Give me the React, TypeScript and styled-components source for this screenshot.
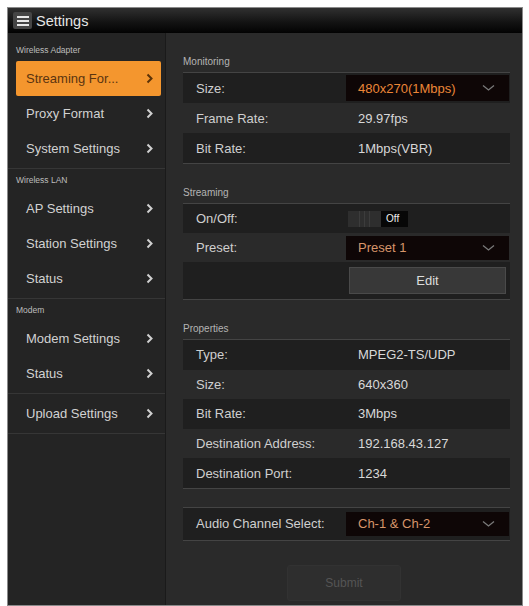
import React from 'react';
import styled, { createGlobalStyle } from 'styled-components';

const GlobalStyle = createGlobalStyle`
  html, body {
    margin: 0;
    padding: 0;
    background: #ffffff;
  }
  body {
    font-family: "Liberation Sans", Arial, sans-serif;
  }
`;

const Chevron = () => (
  <svg width="13" height="8" viewBox="0 0 13 8">
    <polyline points="1,1.5 6.5,6 12,1.5" fill="none" stroke="#7a7a7a" strokeWidth="1.3" />
  </svg>
);

const Arrow = ({ color }: { color: string }) => (
  <svg width="7" height="11" viewBox="0 0 7 11">
    <polyline points="1.5,1.5 5.5,5.5 1.5,9.5" fill="none" stroke={color} strokeWidth="2" />
  </svg>
);

type Item = { label: string; active?: boolean };
type Group = { title?: string; items: Item[] };

const menu: Group[] = [
  {
    title: 'Wireless Adapter',
    items: [{ label: 'Streaming For...', active: true }, { label: 'Proxy Format' }, { label: 'System Settings' }],
  },
  { title: 'Wireless LAN', items: [{ label: 'AP Settings' }, { label: 'Station Settings' }, { label: 'Status' }] },
  { title: 'Modem', items: [{ label: 'Modem Settings' }, { label: 'Status' }] },
  { items: [{ label: 'Upload Settings' }] },
];

const properties = [
  ['Type:', 'MPEG2-TS/UDP'],
  ['Size:', '640x360'],
  ['Bit Rate:', '3Mbps'],
  ['Destination Address:', '192.168.43.127'],
  ['Destination Port:', '1234'],
];

const App = () => {
  return (
    <>
      <GlobalStyle />
      <Frame>
        <TopBar>
          <MenuButton>
            <span />
            <span />
            <span />
          </MenuButton>
          <TopTitle>Settings</TopTitle>
        </TopBar>
        <Body>
          <Sidebar>
            {menu.map((group, gi) => (
              <MenuGroup key={gi} $first={gi === 0} $titled={!!group.title}>
                {group.title && <GroupTitle>{group.title}</GroupTitle>}
                {group.items.map((item) => (
                  <MenuItem key={item.label} $active={item.active}>
                    <span>{item.label}</span>
                    <Arrow color={item.active ? '#5a3208' : '#d0d0d0'} />
                  </MenuItem>
                ))}
              </MenuGroup>
            ))}
          </Sidebar>

          <Main>
            <Section>
              <SectionTitle>Monitoring</SectionTitle>
              <Table>
                <Row $dark $h={30}>
                  <Label>Size:</Label>
                  <Select $h={26}>
                    <SelectText>480x270(1Mbps)</SelectText>
                    <Chevron />
                  </Select>
                </Row>
                <Row $h={30}>
                  <Label>Frame Rate:</Label>
                  <Value>29.97fps</Value>
                </Row>
                <Row $dark $h={30}>
                  <Label>Bit Rate:</Label>
                  <Value>1Mbps(VBR)</Value>
                </Row>
              </Table>
            </Section>

            <Section>
              <SectionTitle>Streaming</SectionTitle>
              <Table>
                <Row $dark $h={29}>
                  <Label>On/Off:</Label>
                  <Toggle>
                    <ToggleGrip>
                      <i />
                      <i />
                      <i />
                    </ToggleGrip>
                    <ToggleState>Off</ToggleState>
                  </Toggle>
                </Row>
                <Row $h={29}>
                  <Label>Preset:</Label>
                  <Select $h={24}>
                    <SelectText $muted>Preset 1</SelectText>
                    <Chevron />
                  </Select>
                </Row>
                <Row $dark $h={37}>
                  <span />
                  <EditButton>Edit</EditButton>
                </Row>
              </Table>
            </Section>

            <Section>
              <SectionTitle>Properties</SectionTitle>
              <Table>
                {properties.map(([label, value], i) => (
                  <Row key={label} $dark={i % 2 === 0} $h={29.6}>
                    <Label>{label}</Label>
                    <Value>{value}</Value>
                  </Row>
                ))}
              </Table>
            </Section>

            <AudioTable>
              <Row $dark $h={32}>
                <Label>Audio Channel Select:</Label>
                <Select $h={24}>
                  <SelectText $muted>Ch-1 &amp; Ch-2</SelectText>
                  <Chevron />
                </Select>
              </Row>
            </AudioTable>

            <SubmitRow>
              <SubmitButton disabled>Submit</SubmitButton>
            </SubmitRow>
          </Main>
        </Body>
      </Frame>
    </>
  );
};

export default App;

const Frame = styled.div`
  margin: 7px 6px 0 7px;
  height: 597px;
  border: 1px solid #8a8a8a;
  display: flex;
  flex-direction: column;
  background: #2a2a2a;
  overflow: hidden;
`;

const TopBar = styled.div`
  height: 25px;
  flex-shrink: 0;
  display: flex;
  align-items: center;
  gap: 4px;
  padding-left: 5px;
  background: linear-gradient(#303030, #141414 55%, #020202);
`;

const MenuButton = styled.div`
  width: 19px;
  height: 17px;
  border-radius: 2px;
  background: #454545;
  display: flex;
  flex-direction: column;
  justify-content: center;
  align-items: center;
  gap: 2px;

  span {
    display: block;
    width: 12px;
    height: 2px;
    background: #e8e8e8;
  }
`;

const TopTitle = styled.div`
  color: #e6e6e6;
  font-size: 14.5px;
`;

const Body = styled.div`
  flex: 1;
  display: flex;
  min-height: 0;
`;

const Sidebar = styled.div`
  width: 157px;
  flex-shrink: 0;
  background: #242424;
  border-right: 1px solid #1a1a1a;
`;

const MenuGroup = styled.div<{ $first?: boolean; $titled?: boolean }>`
  padding-top: ${(p) => (p.$first ? '6px' : p.$titled ? '0' : '2px')};
  padding-bottom: 2px;
  border-bottom: 1px solid #363636;
`;

const GroupTitle = styled.div`
  height: 22px;
  line-height: 22px;
  padding-left: 8px;
  font-size: 8.5px;
  color: #bdbdbd;
`;

const MenuItem = styled.div<{ $active?: boolean }>`
  height: 35px;
  margin: 0 4px 0 8px;
  padding: 0 8px 0 10px;
  display: flex;
  align-items: center;
  justify-content: space-between;
  font-size: 13px;
  color: ${(p) => (p.$active ? '#5a3410' : '#d2d2d2')};
  background: ${(p) => (p.$active ? '#f4962e' : 'transparent')};
  border-radius: 2px;
`;

const Main = styled.div`
  flex: 1;
  padding: 18px 12px 0 17px;
  background: #2a2a2a;
`;

const Section = styled.div`
  margin-bottom: 18px;
`;

const SectionTitle = styled.div`
  height: 21px;
  line-height: 21px;
  font-size: 10px;
  color: #b4b4b4;
  border-bottom: 1px solid #444444;
`;

const Table = styled.div`
  border-bottom: 1px solid #444444;
`;

const AudioTable = styled.div`
  margin-top: 2px;
  border-top: 1px solid #444444;
  border-bottom: 1px solid #444444;
`;

const Row = styled.div<{ $dark?: boolean; $h: number }>`
  height: ${(p) => p.$h}px;
  display: grid;
  grid-template-columns: 163px 1fr;
  align-items: center;
  background: ${(p) => (p.$dark ? '#1f1f1f' : 'transparent')};
`;

const Label = styled.div`
  padding-left: 13px;
  font-size: 13px;
  color: #cfcfcf;
  white-space: nowrap;
`;

const Value = styled.div`
  padding-left: 12px;
  font-size: 13px;
  color: #d8d8d8;
`;

const Select = styled.div<{ $h: number }>`
  height: ${(p) => p.$h}px;
  margin-right: 1px;
  padding: 0 14px 0 12px;
  display: flex;
  align-items: center;
  justify-content: space-between;
  background: #0e0606;
`;

const SelectText = styled.span<{ $muted?: boolean }>`
  font-size: 13px;
  color: ${(p) => (p.$muted ? '#d6956a' : '#ec8638')};
`;

const Toggle = styled.div`
  margin-left: 2px;
  width: 60px;
  height: 16px;
  display: flex;
`;

const ToggleGrip = styled.div`
  width: 33px;
  background: #2e2e2e;
  display: flex;
  justify-content: center;
  gap: 4px;

  i {
    display: block;
    width: 1px;
    background: #3c3c3c;
  }
`;

const ToggleState = styled.div`
  flex: 1;
  background: #070707;
  color: #eeeeee;
  font-size: 10px;
  display: flex;
  align-items: center;
  padding-left: 5px;
`;

const EditButton = styled.button`
  margin-left: 3px;
  width: 157px;
  height: 27px;
  background: #383838;
  border: 1px solid #4a4a4a;
  color: #dcdcdc;
  font-family: "Liberation Sans", Arial, sans-serif;
  font-size: 13px;
  padding: 0;
`;

const SubmitRow = styled.div`
  display: flex;
  justify-content: center;
  padding-right: 5px;
  margin-top: 24px;
`;

const SubmitButton = styled.button`
  width: 114px;
  height: 36px;
  background: #2e2e2e;
  border: 1px solid #323232;
  border-radius: 3px;
  color: #555555;
  font-family: "Liberation Sans", Arial, sans-serif;
  font-size: 12px;
`;
